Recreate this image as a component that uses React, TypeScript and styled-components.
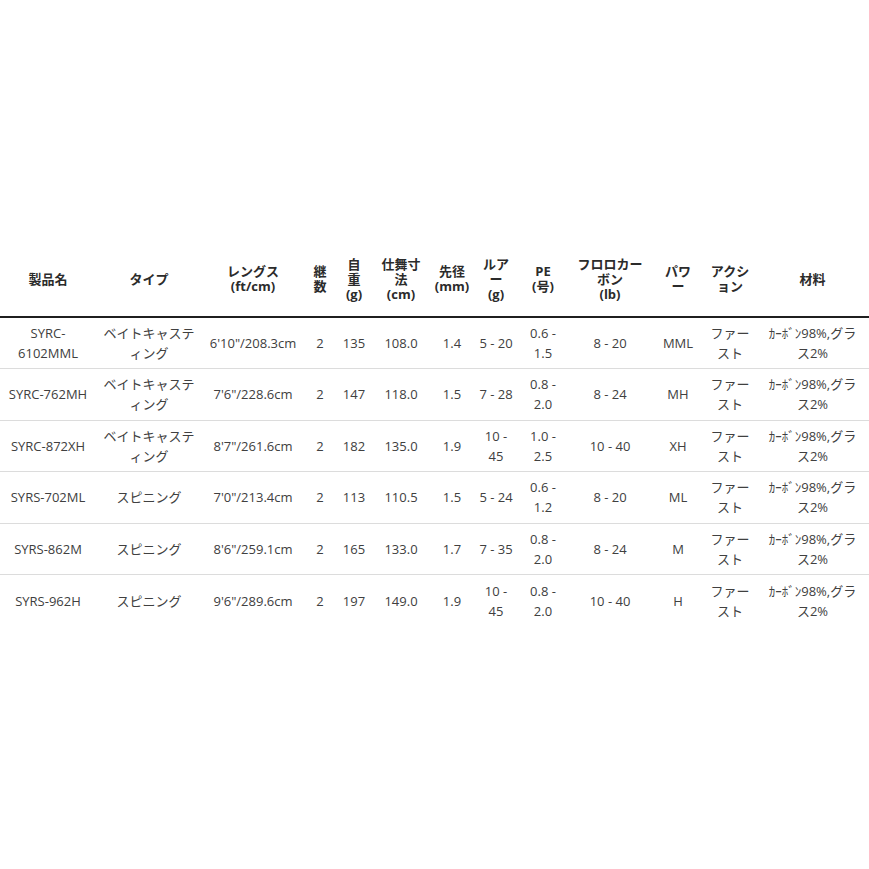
import styled, { createGlobalStyle } from 'styled-components';

type Rod = {
  name: string;
  type: string;
  length: string;
  pieces: string;
  weight: string;
  closed: string;
  tip: string;
  lure: string;
  pe: string;
  fluoro: string;
  power: string;
  action: string;
  material: string;
};

// column widths picked so the body text wraps where it does in the catalogue
const COLUMN_WIDTHS = [96, 106, 102, 32, 36, 58, 44, 44, 50, 84, 52, 52, 113];

// header labels, one entry per printed line
const HEADERS: string[][] = [
  ['製品名'],
  ['タイプ'],
  ['レングス', '(ft/cm)'],
  ['継', '数'],
  ['自', '重', '(g)'],
  ['仕舞寸', '法', '(cm)'],
  ['先径', '(mm)'],
  ['ルア', 'ー', '(g)'],
  ['PE', '(号)'],
  ['フロロカー', 'ボン', '(lb)'],
  ['パワ', 'ー'],
  ['アクシ', 'ョン'],
  ['材料'],
];

const MATERIAL = 'ｶｰﾎﾞﾝ98%,グラス2%';

const RODS: Rod[] = [
  { name: 'SYRC-6102MML', type: 'ベイトキャスティング', length: '6\'10"/208.3cm', pieces: '2', weight: '135', closed: '108.0', tip: '1.4', lure: '5 - 20', pe: '0.6 - 1.5', fluoro: '8 - 20', power: 'MML', action: 'ファースト', material: MATERIAL },
  { name: 'SYRC-762MH', type: 'ベイトキャスティング', length: '7\'6"/228.6cm', pieces: '2', weight: '147', closed: '118.0', tip: '1.5', lure: '7 - 28', pe: '0.8 - 2.0', fluoro: '8 - 24', power: 'MH', action: 'ファースト', material: MATERIAL },
  { name: 'SYRC-872XH', type: 'ベイトキャスティング', length: '8\'7"/261.6cm', pieces: '2', weight: '182', closed: '135.0', tip: '1.9', lure: '10 - 45', pe: '1.0 - 2.5', fluoro: '10 - 40', power: 'XH', action: 'ファースト', material: MATERIAL },
  { name: 'SYRS-702ML', type: 'スピニング', length: '7\'0"/213.4cm', pieces: '2', weight: '113', closed: '110.5', tip: '1.5', lure: '5 - 24', pe: '0.6 - 1.2', fluoro: '8 - 20', power: 'ML', action: 'ファースト', material: MATERIAL },
  { name: 'SYRS-862M', type: 'スピニング', length: '8\'6"/259.1cm', pieces: '2', weight: '165', closed: '133.0', tip: '1.7', lure: '7 - 35', pe: '0.8 - 2.0', fluoro: '8 - 24', power: 'M', action: 'ファースト', material: MATERIAL },
  { name: 'SYRS-962H', type: 'スピニング', length: '9\'6"/289.6cm', pieces: '2', weight: '197', closed: '149.0', tip: '1.9', lure: '10 - 45', pe: '0.8 - 2.0', fluoro: '10 - 40', power: 'H', action: 'ファースト', material: MATERIAL },
];

const GlobalStyle = createGlobalStyle`
  body {
    margin: 0;
    background: #fff;
    font-family: "Open Sans", "Noto Sans CJK JP", sans-serif;
    color: #404040;
  }
`;

function App() {
  return (
    <>
      <GlobalStyle />
      <StyledPage>
        <StyledTable>
          <colgroup>
            {COLUMN_WIDTHS.map((width, i) => (
              <col key={i} style={{ width }} />
            ))}
          </colgroup>
          <thead>
            <tr>
              {HEADERS.map((lines) => (
                <StyledHeadCell key={lines.join('')}>
                  {lines.map((line, i) => (
                    <StyledHeadLine key={i}>{line}</StyledHeadLine>
                  ))}
                </StyledHeadCell>
              ))}
            </tr>
          </thead>
          <tbody>
            {RODS.map((rod) => (
              <StyledRow key={rod.name}>
                <StyledCell>{rod.name}</StyledCell>
                <StyledCell>{rod.type}</StyledCell>
                <StyledCell>{rod.length}</StyledCell>
                <StyledCell>{rod.pieces}</StyledCell>
                <StyledCell>{rod.weight}</StyledCell>
                <StyledCell>{rod.closed}</StyledCell>
                <StyledCell>{rod.tip}</StyledCell>
                <StyledCell>{rod.lure}</StyledCell>
                <StyledCell>{rod.pe}</StyledCell>
                <StyledCell>{rod.fluoro}</StyledCell>
                <StyledCell>{rod.power}</StyledCell>
                <StyledCell>{rod.action}</StyledCell>
                <StyledCell inset={9}>{rod.material}</StyledCell>
              </StyledRow>
            ))}
          </tbody>
        </StyledTable>
      </StyledPage>
    </>
  );
}

const StyledPage = styled.div`
  padding-top: 250px;
  width: 869px;
`;

const StyledTable = styled.table`
  width: 869px;
  table-layout: fixed;
  border-collapse: collapse;
  font-size: 13px;
  line-break: loose;
`;

const StyledHeadCell = styled.th`
  height: 67px;
  padding: 0 3px 10px;
  box-sizing: border-box;
  font-weight: 700;
  line-height: 16px;
  color: #2b2b2b;
  text-align: center;
  vertical-align: middle;
  white-space: nowrap;
  border-bottom: 2px solid #1f1f1f;
`;

const StyledHeadLine = styled.div`
  height: 15px;
  overflow: visible;
`;

const StyledRow = styled.tr`
  border-bottom: 1px solid #dcdcdc;

  &:last-child {
    border-bottom: none;
  }
`;

const StyledCell = styled.td.withConfig({
  shouldForwardProp: (prop) => prop !== 'inset',
})<{ inset?: number }>`
  height: 51.5px;
  padding: 0 ${({ inset }) => inset ?? 3}px;
  box-sizing: border-box;
  line-height: 20px;
  text-align: center;
  vertical-align: middle;
`;

export default App;
